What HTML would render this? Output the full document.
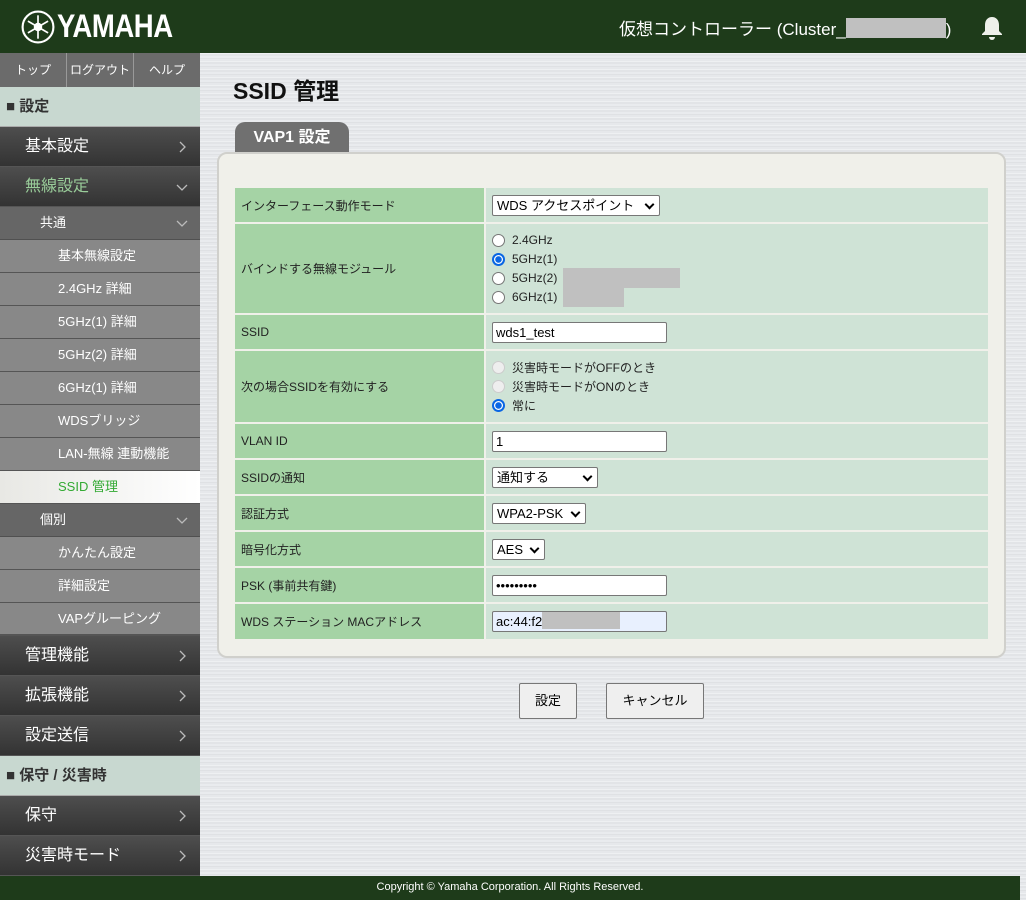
<!DOCTYPE html>
<html><head><meta charset="utf-8"><style>
*{box-sizing:border-box;margin:0;padding:0}
body{width:1026px;height:900px;position:relative;overflow:hidden;font-family:"Liberation Sans","Noto Sans CJK JP",sans-serif;background:#e4e6e9;
background-image:repeating-linear-gradient(180deg,#e9ebee 0 2px,#dfe1e4 2px 3px,#e6e8eb 3px 5px,#eef0f2 5px 6px,#e2e4e7 6px 8px);}
.abs{position:absolute}
#hdr{left:0;top:0;width:1026px;height:53px;background:#1e3b1a;color:#fff}
#side{left:0;top:53px;width:200px;height:823px;background:#888}
.tabs{display:flex;height:34px;background:#6b6b6b}
.tabs div{flex:1;color:#fff;font-size:12px;text-align:center;line-height:34px;border-right:1px solid #999}
.tabs div:last-child{border:none}
.sec{height:40px;background:#c8d8d0;color:#333;font-weight:bold;font-size:15px;line-height:39px;padding-left:6px;border-bottom:1px solid #aaa}
.main{height:40px;background:linear-gradient(#4e4e4e,#333);color:#fff;font-size:16px;line-height:40px;padding-left:25px;position:relative;border-bottom:1px solid #555}
.chev{position:absolute;right:12px;top:50%;margin-top:-6px}
.sub{height:33px;background:#666;color:#fff;font-size:13px;line-height:32px;padding-left:40px;position:relative;border-bottom:1px solid #505050}
.item{height:33px;background:#888;color:#fff;font-size:13px;line-height:32px;padding-left:58px;border-bottom:1px solid #555}
.item.act{background:linear-gradient(90deg,#e8e8e4,#fff);color:#3a3}
#foot{left:0;top:876px;width:1020px;height:24px;background:#1e3b1a;color:#fff;font-size:11px;text-align:center;line-height:22px}
#panel{left:217px;top:152px;width:789px;height:506px;background:#f0f0ea;border:2px solid #d0d0cc;border-radius:10px}
#tab{left:235px;top:122px;width:114px;height:31px;background:#707070;border-radius:10px 10px 0 0;color:#fff;font-weight:bold;font-size:16px;text-align:center;line-height:32px}
.row{position:absolute;left:235px;width:753px;display:flex}
.lab{width:249px;background:#a5d3a5;font-size:12px;color:#222;padding-left:6px;display:flex;align-items:center}
.val{margin-left:2px;flex:1;background:#cfe3d6;font-size:12px;color:#222;padding-left:6px;display:flex;flex-direction:column;justify-content:center}
.sel{display:inline-block;height:21px;border:1px solid #777;border-radius:2px;background:#fff;font-size:13px;line-height:19px;padding-left:4px;position:relative;color:#000}
.sel:after{content:"";position:absolute;right:6px;top:5px;width:5px;height:5px;border-right:2px solid #000;border-bottom:2px solid #000;transform:rotate(45deg)}
.inp{width:175px;height:21px;border:1px solid #777;border-radius:2px;background:#fff;font-size:13px;line-height:19px;padding-left:3px;color:#000}
.rad{display:flex;align-items:center;height:19px;font-size:12px}
.rb{width:13px;height:13px;border-radius:50%;border:1px solid #767676;background:#fff;margin-right:7px}
.rb.on{border:2px solid #0a66e4;background:radial-gradient(#0a66e4 0 3px,#fff 3.5px)}
.rb.dis{border-color:#ccc;background:#eee}
.gr{background:#c0c0c0;display:inline-block;height:20px;margin-left:6px}
.btn{position:absolute;top:683px;height:36px;border:1px solid #777;border-radius:2px;background:#efefef;font-size:13px;text-align:center;line-height:34px;color:#000}
</style></head><body>
<svg width="0" height="0" style="position:absolute"><defs>
<symbol id="r" viewBox="0 0 12 12"><path d="M4 1l5 5-5 5" fill="none" stroke="#bbb" stroke-width="1.3"/></symbol>
<symbol id="d" viewBox="0 0 12 12"><path d="M1 4l5 5 5-5" fill="none" stroke="#bbb" stroke-width="1.3"/></symbol>
</defs></svg>
<div id="hdr" class="abs">
<svg class="abs" style="left:21px;top:10px" width="34" height="34" viewBox="0 0 32 32"><circle cx="16" cy="16" r="14.5" fill="none" stroke="#fff" stroke-width="2"/><g stroke="#fff" stroke-width="1.6"><line x1="16" y1="5" x2="16" y2="27"/><line x1="6.5" y1="10.5" x2="25.5" y2="21.5"/><line x1="6.5" y1="21.5" x2="25.5" y2="10.5"/></g><circle cx="16" cy="16" r="4" fill="#fff"/></svg>
<div class="abs" style="left:57px;top:8px;font-size:32px;line-height:36px;font-weight:bold;letter-spacing:-0.5px;transform:scaleX(0.86);transform-origin:left">YAMAHA</div>
<div class="abs" style="left:619px;top:15px;font-size:17px">仮想コントローラー (Cluster_<span style="display:inline-block;width:100px;height:20px;background:#c0c0c0;vertical-align:-3px"></span>)</div>
<svg class="abs" style="left:980px;top:15px" width="24" height="26" viewBox="0 0 24 26"><path d="M12 2c-4 0-7 3-7 8v6l-3 3v1h20v-1l-3-3v-6c0-5-3-8-7-8z" fill="#eef0ea"/><path d="M9 22a3 3 0 0 0 6 0z" fill="#eef0ea"/></svg>
</div>
<div id="side" class="abs">
<div class="tabs"><div>トップ</div><div>ログアウト</div><div>ヘルプ</div></div>
<div class="sec">■ 設定</div>
<div class="main">基本設定<svg class="chev" width="12" height="12"><use href="#r"/></svg></div>
<div class="main" style="color:#9c9">無線設定<svg class="chev" width="12" height="12"><use href="#d"/></svg></div>
<div class="sub">共通<svg class="chev" width="12" height="12"><use href="#d"/></svg></div>
<div class="item">基本無線設定</div>
<div class="item">2.4GHz 詳細</div>
<div class="item">5GHz(1) 詳細</div>
<div class="item">5GHz(2) 詳細</div>
<div class="item">6GHz(1) 詳細</div>
<div class="item">WDSブリッジ</div>
<div class="item">LAN-無線 連動機能</div>
<div class="item act">SSID 管理</div>
<div class="sub">個別<svg class="chev" width="12" height="12"><use href="#d"/></svg></div>
<div class="item">かんたん設定</div>
<div class="item">詳細設定</div>
<div class="item" style="border-bottom:2px solid #555">VAPグルーピング</div>
<div class="main">管理機能<svg class="chev" width="12" height="12"><use href="#r"/></svg></div>
<div class="main">拡張機能<svg class="chev" width="12" height="12"><use href="#r"/></svg></div>
<div class="main">設定送信<svg class="chev" width="12" height="12"><use href="#r"/></svg></div>
<div class="sec">■ 保守 / 災害時</div>
<div class="main">保守<svg class="chev" width="12" height="12"><use href="#r"/></svg></div>
<div class="main">災害時モード<svg class="chev" width="12" height="12"><use href="#r"/></svg></div>
</div>
<div class="abs" style="left:233px;top:72px;font-size:23px;font-weight:bold;color:#111">SSID 管理</div>
<div id="tab" class="abs">VAP1 設定</div>
<div id="panel" class="abs"></div>
<div class="row" style="top:188px;height:34px"><div class="lab">インターフェース動作モード</div><div class="val"><span class="sel" style="width:168px">WDS アクセスポイント</span></div></div>
<div class="row" style="top:224px;height:89px"><div class="lab">バインドする無線モジュール</div><div class="val">
<div class="rad"><span class="rb"></span>2.4GHz</div>
<div class="rad"><span class="rb on"></span>5GHz(1)</div>
<div class="rad"><span class="rb"></span>5GHz(2)<span class="gr" style="width:117px"></span></div>
<div class="rad"><span class="rb"></span>6GHz(1)<span class="gr" style="width:61px"></span></div></div></div>
<div class="row" style="top:315px;height:34px"><div class="lab">SSID</div><div class="val"><div class="inp">wds1_test</div></div></div>
<div class="row" style="top:351px;height:71px"><div class="lab">次の場合SSIDを有効にする</div><div class="val">
<div class="rad"><span class="rb dis"></span>災害時モードがOFFのとき</div>
<div class="rad"><span class="rb dis"></span>災害時モードがONのとき</div>
<div class="rad"><span class="rb on"></span>常に</div></div></div>
<div class="row" style="top:424px;height:34px"><div class="lab">VLAN ID</div><div class="val"><div class="inp">1</div></div></div>
<div class="row" style="top:460px;height:34px"><div class="lab">SSIDの通知</div><div class="val"><span class="sel" style="width:106px">通知する</span></div></div>
<div class="row" style="top:496px;height:34px"><div class="lab">認証方式</div><div class="val"><span class="sel" style="width:94px">WPA2-PSK</span></div></div>
<div class="row" style="top:532px;height:34px"><div class="lab">暗号化方式</div><div class="val"><span class="sel" style="width:53px">AES</span></div></div>
<div class="row" style="top:568px;height:34px"><div class="lab">PSK (事前共有鍵)</div><div class="val"><div class="inp">•••••••••</div></div></div>
<div class="row" style="top:604px;height:35px"><div class="lab">WDS ステーション MACアドレス</div><div class="val"><div class="inp" style="background:#e8f0fe">ac:44:f2<span style="display:inline-block;width:78px;height:17px;background:#c0c0c0;vertical-align:-3px"></span></div></div></div>
<div class="btn" style="left:519px;width:58px">設定</div>
<div class="btn" style="left:606px;width:98px">キャンセル</div>
<div id="foot" class="abs">Copyright © Yamaha Corporation. All Rights Reserved.</div>
</body></html>
